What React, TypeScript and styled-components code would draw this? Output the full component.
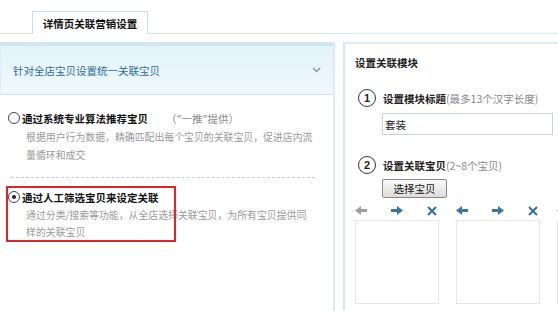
import styled, { createGlobalStyle } from 'styled-components';

const GlobalStyle = createGlobalStyle`
  html, body {
    margin: 0;
    padding: 0;
    background: #fff;
  }
  body {
    font-family: "Noto Sans CJK SC", "Liberation Sans", sans-serif;
    font-size: 10.5px;
    color: #333;
  }
`;

const Page = styled.div`
  width: 558px;
  height: 311px;
  overflow: hidden;
  display: flex;
  flex-direction: column;
`;

const TabBar = styled.div`
  height: 34px;
  box-sizing: border-box;
  padding-left: 32px;
  display: flex;
  align-items: flex-end;
  border-bottom: 1px solid #d9e7ef;
`;

const Tab = styled.div`
  width: 116px;
  height: 23px;
  box-sizing: border-box;
  border: 1px solid #cddde7;
  border-bottom: none;
  background: #fff;
  margin-bottom: -1px;
  display: flex;
  align-items: center;
  justify-content: center;
  font-weight: bold;
  font-size: 10.5px;
  color: #111;
`;

const Content = styled.div`
  flex: 1;
  display: flex;
  padding-top: 8px;
  gap: 8px;
  min-height: 0;
`;

const LeftPanel = styled.div`
  width: 335px;
  flex-shrink: 0;
  box-sizing: border-box;
  border-right: 2px solid #dbeaf3;
  display: flex;
  flex-direction: column;
  position: relative;
`;

const Header = styled.div`
  height: 53px;
  box-sizing: border-box;
  border-top: 4px solid #cfe6f1;
  border-bottom: 1px solid #cde2ee;
  border-left: 1px solid #dfeef5;
  background: linear-gradient(#e3f3fa, #eef8fc);
  display: flex;
  align-items: center;
  justify-content: space-between;
  padding: 0 12px;
  color: #2e6c9e;
  font-size: 10.5px;
`;

const Chevron = styled.svg`
  width: 9px;
  height: 6px;
`;

const Options = styled.div`
  padding: 14px 0 0 8px;
  display: flex;
  flex-direction: column;
`;

const Option = styled.div<{ $top?: number }>`
  padding-top: ${(p) => p.$top ?? 0}px;
`;

const OptionTitle = styled.div`
  display: flex;
  align-items: center;
  height: 18px;
  font-weight: bold;
  font-size: 10.5px;
  color: #111;
`;

const Radio = styled.span<{ $checked?: boolean }>`
  width: 10px;
  height: 10px;
  border: 1px solid #444;
  border-radius: 50%;
  margin-right: 2px;
  position: relative;
  flex-shrink: 0;
  &::after {
    content: '';
    display: ${(p) => (p.$checked ? 'block' : 'none')};
    position: absolute;
    left: 3px;
    top: 3px;
    width: 4px;
    height: 4px;
    border-radius: 50%;
    background: #222;
  }
`;

const Hint = styled.span<{ $gap?: number }>`
  font-weight: normal;
  color: #888;
  margin-left: ${(p) => p.$gap ?? 0}px;
`;

const Desc = styled.div<{ $lh: number }>`
  padding-left: 18px;
  width: 289px;
  color: #9a9a9a;
  font-size: 9.9px;
  line-height: ${(p) => p.$lh}px;
  margin-top: 1px;
`;

const Dashed = styled.div`
  margin: 13px 18px 0 3px;
  border-top: 1px dashed #c9c9c9;
`;

const Highlight = styled.div`
  position: absolute;
  left: 6px;
  top: 144px;
  width: 170px;
  height: 56px;
  box-sizing: border-box;
  border: 2px solid #e3232c;
  pointer-events: none;
`;

const RightPanel = styled.div`
  flex: 1;
  min-width: 0;
  overflow: hidden;
  border-left: 2px solid #d4e8f3;
  border-top: 2px solid #dcecf5;
  padding: 10px 0 0 10px;
  display: flex;
  flex-direction: column;
`;

const RightTitle = styled.div`
  font-weight: bold;
  color: #222;
  height: 18px;
  line-height: 18px;
`;

const Step = styled.div<{ $top: number }>`
  display: flex;
  align-items: center;
  margin-top: ${(p) => p.$top}px;
  padding-left: 3px;
  font-weight: bold;
  color: #222;
  white-space: nowrap;
`;

const StepNum = styled.span`
  width: 16px;
  height: 16px;
  border: 1.5px solid #333;
  border-radius: 50%;
  display: flex;
  align-items: center;
  justify-content: center;
  font-family: "Liberation Sans", sans-serif;
  font-weight: bold;
  font-size: 11px;
  margin-right: 7px;
`;

const Input = styled.div`
  margin: 6px 0 0 27px;
  width: 171px;
  height: 22px;
  box-sizing: border-box;
  border: 1px solid #c9d3da;
  padding-left: 2px;
  display: flex;
  align-items: center;
  color: #222;
`;

const Button = styled.div`
  margin: 5px 0 0 27px;
  width: 65px;
  height: 19px;
  box-sizing: border-box;
  border: 1px solid #8a8a8a;
  border-radius: 2px;
  background: linear-gradient(#fafafa, #dcdcdc);
  display: flex;
  align-items: center;
  justify-content: center;
  color: #111;
`;

const Slots = styled.div`
  display: flex;
  gap: 17px;
  margin-top: 6px;
`;

const Slot = styled.div`
  width: 84px;
  flex-shrink: 0;
`;

const SlotTools = styled.div`
  height: 13px;
  display: flex;
  align-items: center;
  justify-content: space-between;
  padding-right: 2px;
`;

const SlotBox = styled.div`
  margin-top: 3px;
  height: 82px;
  border: 1px solid #e6e6e6;
`;

const Arrow = ({ dir, color }: { dir: 'left' | 'right'; color: string }) => (
  <svg width="12" height="9" viewBox="0 0 12 9">
    <path
      d={
        dir === 'right'
          ? 'M0 3h6V0l6 4.5L6 9V6H0z'
          : 'M12 3H6V0L0 4.5 6 9V6h6z'
      }
      fill={color}
    />
  </svg>
);

const Cross = () => (
  <svg width="10" height="10" viewBox="0 0 10 10">
    <path d="M1 1l8 8M9 1l-8 8" stroke="#2f6ea8" strokeWidth="2" />
  </svg>
);

const App = () => {
  const slots = [
    { leftColor: '#a0a0a0' },
    { leftColor: '#3775ad' },
    { leftColor: '#3775ad' },
  ];
  return (
    <Page>
      <GlobalStyle />
      <TabBar>
        <Tab>详情页关联营销设置</Tab>
      </TabBar>
      <Content>
        <LeftPanel>
          <Header>
            <span>针对全店宝贝设置统一关联宝贝</span>
            <Chevron viewBox="0 0 9 6">
              <path d="M1 1l3.5 3.5L8 1" stroke="#6a8ba3" strokeWidth="1.2" fill="none" />
            </Chevron>
          </Header>
          <Options>
            <Option>
              <OptionTitle>
                <Radio />
                通过系统专业算法推荐宝贝
                <Hint $gap={18}>（"一推"提供）</Hint>
              </OptionTitle>
              <Desc $lh={18}>根据用户行为数据，精确匹配出每个宝贝的关联宝贝，促进店内流量循环和成交</Desc>
            </Option>
            <Dashed />
            <Option $top={10}>
              <OptionTitle>
                <Radio $checked />
                通过人工筛选宝贝来设定关联
              </OptionTitle>
              <Desc $lh={17}>通过分类/搜索等功能，从全店选择关联宝贝，为所有宝贝提供同样的关联宝贝</Desc>
            </Option>
          </Options>
          <Highlight />
        </LeftPanel>
        <RightPanel>
          <RightTitle>设置关联模块</RightTitle>
          <Step $top={17}>
            <StepNum>1</StepNum>
            设置模块标题<Hint>(最多13个汉字长度)</Hint>
          </Step>
          <Input>套装</Input>
          <Step $top={21}>
            <StepNum>2</StepNum>
            设置关联宝贝<Hint>(2~8个宝贝)</Hint>
          </Step>
          <Button>选择宝贝</Button>
          <Slots>
            {slots.map((s, i) => (
              <Slot key={i}>
                <SlotTools>
                  <Arrow dir="left" color={s.leftColor} />
                  <Arrow dir="right" color="#3775ad" />
                  <Cross />
                </SlotTools>
                <SlotBox />
              </Slot>
            ))}
          </Slots>
        </RightPanel>
      </Content>
    </Page>
  );
};

export default App;
